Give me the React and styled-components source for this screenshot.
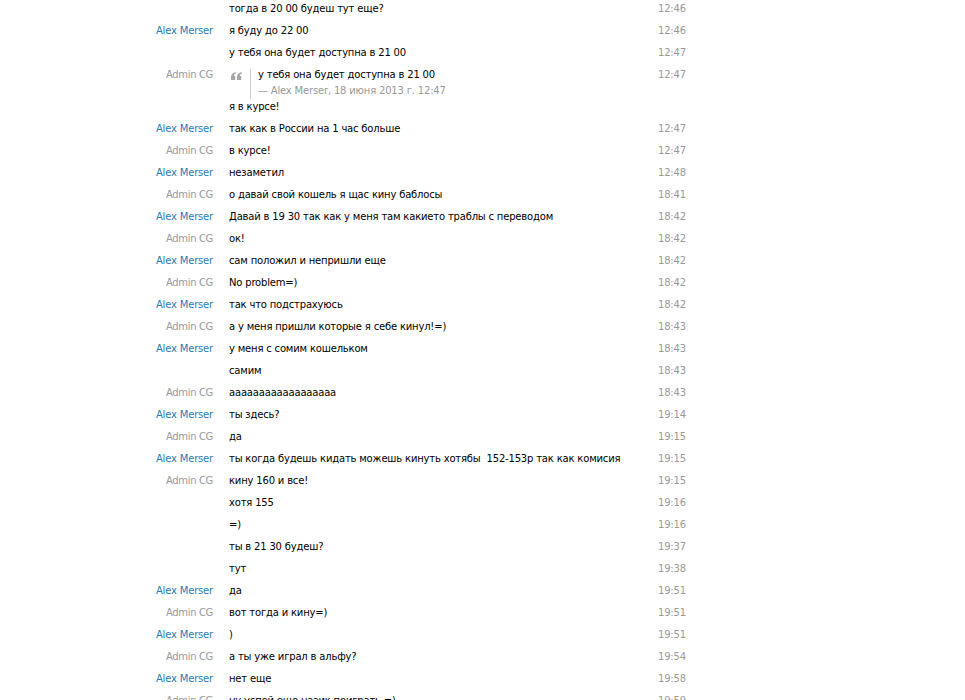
import React from "react";
import styled, { createGlobalStyle } from "styled-components";

const Global = createGlobalStyle`
  html, body { margin: 0; padding: 0; background: #fff; }
  body {
    font-family: "DejaVu Sans", Tahoma, sans-serif;
    font-size: 10px;
    letter-spacing: -0.18px;
    color: #000;
  }
`;

const Log = styled.div`
  margin-top: -2px;
  padding-left: 140px;
  width: 560px;
`;

const Row = styled.div`
  display: grid;
  grid-template-columns: 73px 445px 42px;
  line-height: 16px;
  padding: 3px 0;
`;

const Name = styled.div`
  text-align: right;
  color: ${(p) => (p.$who === "alex" ? "#2b7ab5" : "#999")};
  white-space: nowrap;
  letter-spacing: ${(p) => (p.$who === "alex" ? "-0.18px" : "-0.35px")};
`;

const Body = styled.div`
  padding-left: 16px;
  white-space: pre;
`;

const Time = styled.div`
  color: #999;
`;

const Quote = styled.div`
  display: flex;
  align-items: flex-start;
`;

const QuoteMark = styled.div`
  width: 21px;
  padding: 5px 0 0 2px;
  box-sizing: border-box;
  line-height: 0;
`;

const QuoteBody = styled.div`
  border-left: 1px solid #ccc;
  padding-left: 7px;
  margin-top: 2px;
`;

const QuoteText = styled.div`
  margin-top: -2px;
`;

const QuoteAuthor = styled.div`
  color: #999;
`;

const QuoteIcon = () => (
  <svg width="11" height="8" viewBox="0 0 11 8" fill="#a6a6a6">
    <path d="M0 8 L0 4.5 Q0.6 1 4.6 0 L4.6 1.6 Q3 2.3 2.8 4 L4.2 4 L4.2 8 Z" />
    <path d="M6 8 L6 4.5 Q6.6 1 10.6 0 L10.6 1.6 Q9 2.3 8.8 4 L10.2 4 L10.2 8 Z" />
  </svg>
);

const names = { alex: "Alex Merser", admin: "Admin CG" };

const rows = [
  ["", "тогда в 20 00 будеш тут еще?", "12:46"],
  ["alex", "я буду до 22 00", "12:46"],
  ["", "у тебя она будет доступна в 21 00", "12:47"],
  ["admin", "я в курсе!", "12:47", { text: "у тебя она будет доступна в 21 00", author: "— Alex Merser, 18 июня 2013 г. 12:47" }],
  ["alex", "так как в России на 1 час больше", "12:47"],
  ["admin", "в курсе!", "12:47"],
  ["alex", "незаметил", "12:48"],
  ["admin", "о давай свой кошель я щас кину баблосы", "18:41"],
  ["alex", "Давай в 19 30 так как у меня там какието траблы с переводом", "18:42"],
  ["admin", "ок!", "18:42"],
  ["alex", "сам положил и непришли еще", "18:42"],
  ["admin", "No problem=)", "18:42"],
  ["alex", "так что подстрахуюсь", "18:42"],
  ["admin", "а у меня пришли которые я себе кинул!=)", "18:43"],
  ["alex", "у меня с сомим кошельком", "18:43"],
  ["", "самим", "18:43"],
  ["admin", "аааааааааааааааааа", "18:43"],
  ["alex", "ты здесь?", "19:14"],
  ["admin", "да", "19:15"],
  ["alex", "ты когда будешь кидать можешь кинуть хотябы  152-153р так как комисия", "19:15"],
  ["admin", "кину 160 и все!", "19:15"],
  ["", "хотя 155", "19:16"],
  ["", "=)", "19:16"],
  ["", "ты в 21 30 будеш?", "19:37"],
  ["", "тут", "19:38"],
  ["alex", "да", "19:51"],
  ["admin", "вот тогда и кину=)", "19:51"],
  ["alex", ")", "19:51"],
  ["admin", "а ты уже играл в альфу?", "19:54"],
  ["alex", "нет еще", "19:58"],
  ["admin", "ну успей еще назик поиграть =)", "19:59"],
];

export default function App() {
  return (
    <>
      <Global />
      <Log>
        {rows.map(([who, text, time, quote], i) => (
          <Row key={i}>
            <Name $who={who}>{who ? names[who] : ""}</Name>
            <Body>
              {quote && (
                <Quote>
                  <QuoteMark>
                    <QuoteIcon />
                  </QuoteMark>
                  <QuoteBody>
                    <QuoteText>{quote.text}</QuoteText>
                    <QuoteAuthor>{quote.author}</QuoteAuthor>
                  </QuoteBody>
                </Quote>
              )}
              <div>{text}</div>
            </Body>
            <Time>{time}</Time>
          </Row>
        ))}
      </Log>
    </>
  );
}
